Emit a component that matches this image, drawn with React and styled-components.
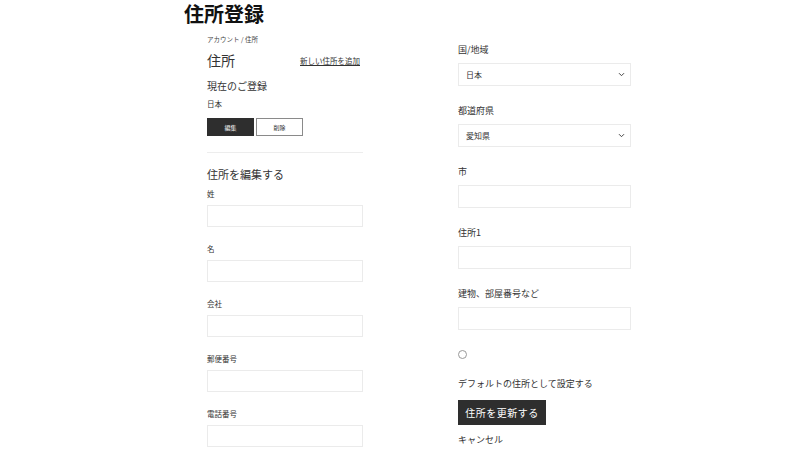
import React from "react";
import styled, { createGlobalStyle } from "styled-components";

const Global = createGlobalStyle`
  html, body { margin: 0; padding: 0; background: #fff; }
  body { font-family: "Noto Sans CJK JP", "Noto Sans", sans-serif; color: #333; }
  * { box-sizing: border-box; }
`;

const Page = styled.div`
  width: 800px;
  height: 450px;
  padding-left: 184px;
  overflow: hidden;
`;

const Title = styled.h1`
  margin: 0;
  padding-top: 1px;
  font-size: 20px;
  line-height: 26px;
  font-weight: 700;
  color: #111;
`;

const Columns = styled.div`
  display: grid;
  grid-template-columns: 156px 173px;
  column-gap: 95px;
  margin-left: 23px;
  align-items: start;
`;

const Col = styled.div`
  display: flex;
  flex-direction: column;
`;

const Crumb = styled.div`
  margin-top: 7px;
  font-size: 6.5px;
  line-height: 10px;
  color: #444;
`;

const HeadRow = styled.div`
  margin-top: 6px;
  height: 20px;
  display: flex;
  align-items: center;
  justify-content: space-between;
`;

const PageName = styled.div`
  font-size: 14px;
  line-height: 20px;
  color: #333;
`;

const AddLink = styled.a`
  font-size: 7.5px;
  line-height: 12px;
  color: #333;
  text-decoration: underline;
  margin-top: 2px;
  margin-right: 3px;
`;

const SubHead = styled.div`
  margin-top: ${(p) => p.$mt}px;
  font-size: ${(p) => p.$size}px;
  line-height: ${(p) => p.$lh}px;
  color: #333;
`;

const Small = styled.div`
  margin-top: 5px;
  font-size: 7.5px;
  line-height: 12px;
`;

const BtnRow = styled.div`
  margin-top: 8px;
  display: flex;
  gap: 2px;
`;

const SmallBtn = styled.button`
  width: 47px;
  height: 18px;
  padding: 0;
  font-family: inherit;
  font-size: 6px;
  border: 1px solid ${(p) => (p.$dark ? "#2e2e2e" : "#8a8a8a")};
  background: ${(p) => (p.$dark ? "#2e2e2e" : "#fff")};
  color: ${(p) => (p.$dark ? "#fff" : "#333")};
`;

const Divider = styled.hr`
  margin: 16px 0 0;
  border: 0;
  height: 1px;
  background: #ededed;
`;

const Field = styled.div`
  display: flex;
  flex-direction: column;
  margin-top: ${(p) => p.$mt}px;
`;

const Label = styled.label`
  font-size: ${(p) => (p.$big ? 9 : 7.5)}px;
  line-height: ${(p) => (p.$big ? 14 : 12)}px;
  color: #333;
`;

const Input = styled.div`
  margin-top: ${(p) => p.$gap}px;
  height: ${(p) => p.$h}px;
  border: 1px solid #ebebeb;
  background: #fff;
`;

const Select = styled.div`
  margin-top: 6px;
  height: 23px;
  border: 1px solid #ebebeb;
  display: flex;
  align-items: center;
  justify-content: space-between;
  padding: 0 5px 0 7px;
  font-size: 8px;
  color: #333;
`;

const Radio = styled.span`
  margin-top: 20px;
  width: 9px;
  height: 9px;
  border: 1px solid #999;
  border-radius: 50%;
  display: block;
`;

const Text = styled.div`
  margin-top: ${(p) => p.$mt}px;
  font-size: 9px;
  line-height: 14px;
  color: #333;
`;

const MainBtn = styled.button`
  margin-top: 9px;
  align-self: flex-start;
  width: 88px;
  height: 25px;
  padding: 0;
  border: 0;
  background: #2e2e2e;
  color: #fff;
  font-family: inherit;
  font-size: 10px;
  letter-spacing: 0.5px;
`;

const Chevron = () => (
  <svg width="7" height="5" viewBox="0 0 7 5">
    <path d="M1 1.2 L3.5 3.7 L6 1.2" fill="none" stroke="#444" strokeWidth="1" />
  </svg>
);

const leftFields = ["姓", "名", "会社", "郵便番号", "電話番号"];
const rightInputs = ["市", "住所1", "建物、部屋番号など"];

export default function App() {
  return (
    <Page>
      <Global />
      <Title>住所登録</Title>
      <Columns>
        <Col>
          <Crumb>アカウント / 住所</Crumb>
          <HeadRow>
            <PageName>住所</PageName>
            <AddLink>新しい住所を追加</AddLink>
          </HeadRow>
          <SubHead $mt={9} $size={10} $lh={14}>現在のご登録</SubHead>
          <Small>日本</Small>
          <BtnRow>
            <SmallBtn $dark>編集</SmallBtn>
            <SmallBtn>削除</SmallBtn>
          </BtnRow>
          <Divider />
          <SubHead $mt={13} $size={11} $lh={16}>住所を編集する</SubHead>
          {leftFields.map((f, i) => (
            <Field key={f} $mt={i === 0 ? 6 : 16}>
              <Label>{f}</Label>
              <Input $gap={5} $h={22} />
            </Field>
          ))}
        </Col>
        <Col>
          <Field $mt={16}>
            <Label $big>国/地域</Label>
            <Select>
              日本
              <Chevron />
            </Select>
          </Field>
          <Field $mt={18}>
            <Label $big>都道府県</Label>
            <Select>
              愛知県
              <Chevron />
            </Select>
          </Field>
          {rightInputs.map((f) => (
            <Field key={f} $mt={18}>
              <Label $big>{f}</Label>
              <Input $gap={6} $h={23} />
            </Field>
          ))}
          <Radio />
          <Text $mt={18}>デフォルトの住所として設定する</Text>
          <MainBtn>住所を更新する</MainBtn>
          <Text $mt={8}>キャンセル</Text>
        </Col>
      </Columns>
    </Page>
  );
}
